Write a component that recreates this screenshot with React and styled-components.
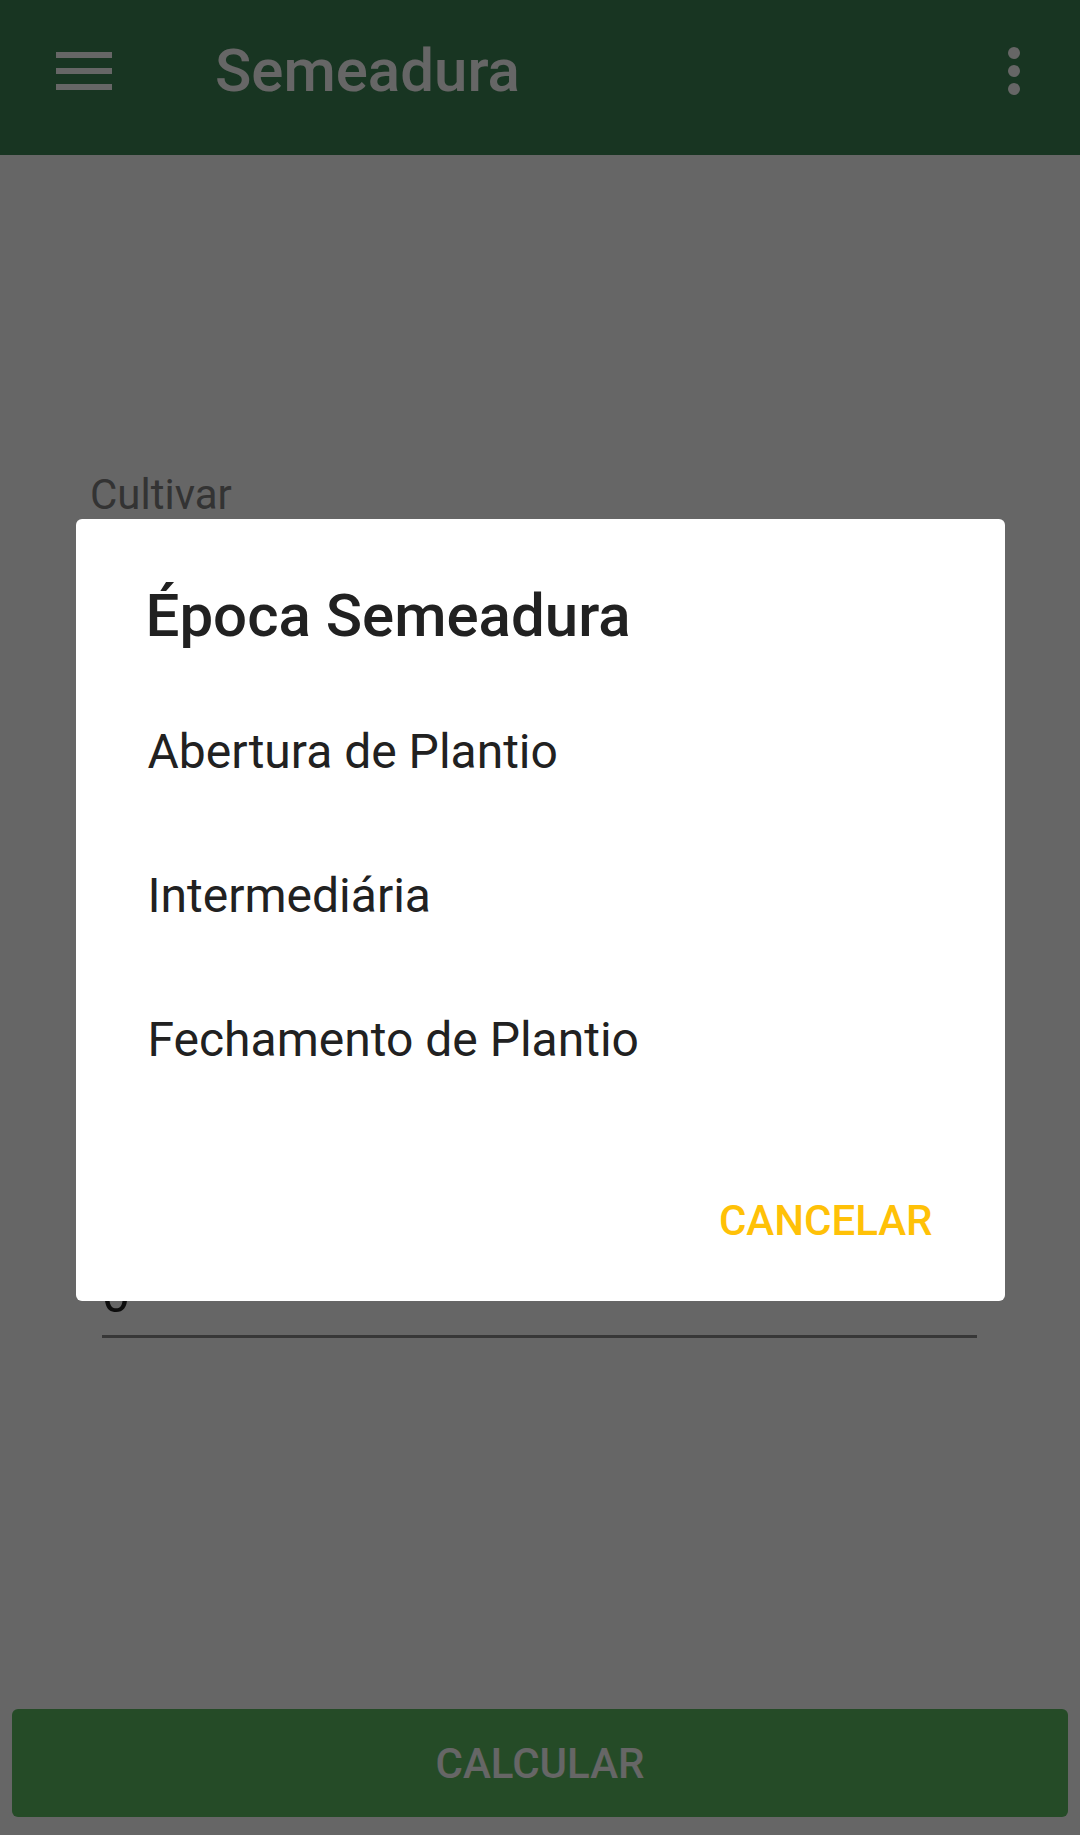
import React from 'react'
import styled, { createGlobalStyle } from 'styled-components'

const GlobalStyle = createGlobalStyle`
  html, body {
    margin: 0;
    padding: 0;
    background: #ffffff;
  }
  body {
    font-family: Roboto, "Noto Sans", "Liberation Sans", sans-serif;
  }
  * {
    box-sizing: border-box;
  }
`;

const Screen = styled.div`
  position: relative;
  display: flex;
  flex-direction: column;
  min-height: 100vh;
  background: #ffffff;
`;

const AppBar = styled.header`
  display: flex;
  align-items: center;
  height: 155px;
  padding: 0 60px 14px 56px;
  background: #3e8455;
  color: #ffffff;
`;

const Title = styled.h1`
  flex: 1;
  margin: 0 0 0 103px;
  font-size: 60px;
  font-weight: 500;
  line-height: 72px;
`;

const Content = styled.main`
  flex: 1;
  display: flex;
  flex-direction: column;
  padding: 315px 90px 0;
`;

const Label = styled.div`
  font-size: 42px;
  line-height: 49px;
  color: #808080;
  margin-top: ${p => p.$spaced ? '36px' : '0'};
`;

const Spinner = styled.div`
  display: flex;
  align-items: center;
  height: 132px;
  padding: 0 12px;
  font-size: 48px;
  color: #212121;
`;

const Input = styled.div`
  margin: 96px 13px 0 12px;
  padding-bottom: 10px;
  font-size: 50px;
  line-height: 59px;
  color: #212121;
  border-bottom: 3px solid #8a8a8a;
`;

const Footer = styled.footer`
  padding: 0 12px 18px;
`;

const PrimaryButton = styled.button`
  display: flex;
  align-items: center;
  justify-content: center;
  width: 100%;
  height: 108px;
  border: none;
  border-radius: 6px;
  background: #5cbb61;
  color: #ffffff;
  font-family: inherit;
  font-size: 42px;
  font-weight: 500;
`;

const Scrim = styled.div`
  position: fixed;
  inset: 0;
  display: flex;
  align-items: center;
  justify-content: center;
  padding-bottom: 15px;
  background: rgba(0, 0, 0, 0.6);
`;

const Dialog = styled.div`
  width: 929px;
  display: flex;
  flex-direction: column;
  background: #ffffff;
  border-radius: 6px;
  padding-bottom: 27px;
`;

const DialogTitle = styled.h2`
  margin: 0;
  padding: 61px 72px 0 70px;
  font-size: 60px;
  font-weight: 500;
  line-height: 72px;
  color: #212121;
`;

const OptionList = styled.ul`
  list-style: none;
  margin: 27px 0 0;
  padding: 0;
`;

const Option = styled.li`
  display: flex;
  align-items: center;
  height: 144px;
  padding-left: 72px;
  font-size: 48px;
  color: #212121;
`;

const Actions = styled.div`
  display: flex;
  justify-content: flex-end;
  margin-top: 55px;
  padding-right: 48px;
`;

const TextButton = styled.button`
  height: 108px;
  padding: 0 24px;
  border: none;
  background: transparent;
  color: #ffc107;
  font-family: inherit;
  font-size: 42px;
  font-weight: 500;
`;

function MenuIcon() {
  return (
    <svg width="56" height="38" viewBox="0 0 56 38">
      <rect x="0" y="0" width="56" height="6" fill="currentColor" />
      <rect x="0" y="16" width="56" height="6" fill="currentColor" />
      <rect x="0" y="32" width="56" height="6" fill="currentColor" />
    </svg>
  )
}

function MoreIcon() {
  return (
    <svg width="12" height="48" viewBox="0 0 12 48">
      <circle cx="6" cy="6" r="6" fill="currentColor" />
      <circle cx="6" cy="24" r="6" fill="currentColor" />
      <circle cx="6" cy="42" r="6" fill="currentColor" />
    </svg>
  )
}

const options = ['Abertura de Plantio', 'Intermediária', 'Fechamento de Plantio'];

export default function App() {
  return (
    <>
      <GlobalStyle />
      <Screen>
        <AppBar>
          <MenuIcon />
          <Title>Semeadura</Title>
          <MoreIcon />
        </AppBar>
        <Content>
          <Label>Cultivar</Label>
          <Spinner>BRS 7180</Spinner>
          <Label $spaced>Época Semeadura</Label>
          <Spinner>Intermediária</Spinner>
          <Label $spaced>População</Label>
          <Spinner>Alta</Spinner>
          <Label $spaced>Área (ha)</Label>
          <Input>0</Input>
        </Content>
        <Footer>
          <PrimaryButton>CALCULAR</PrimaryButton>
        </Footer>
        <Scrim>
          <Dialog>
            <DialogTitle>Época Semeadura</DialogTitle>
            <OptionList>
              {options.map(o => <Option key={o}>{o}</Option>)}
            </OptionList>
            <Actions>
              <TextButton>CANCELAR</TextButton>
            </Actions>
          </Dialog>
        </Scrim>
      </Screen>
    </>
  )
}
